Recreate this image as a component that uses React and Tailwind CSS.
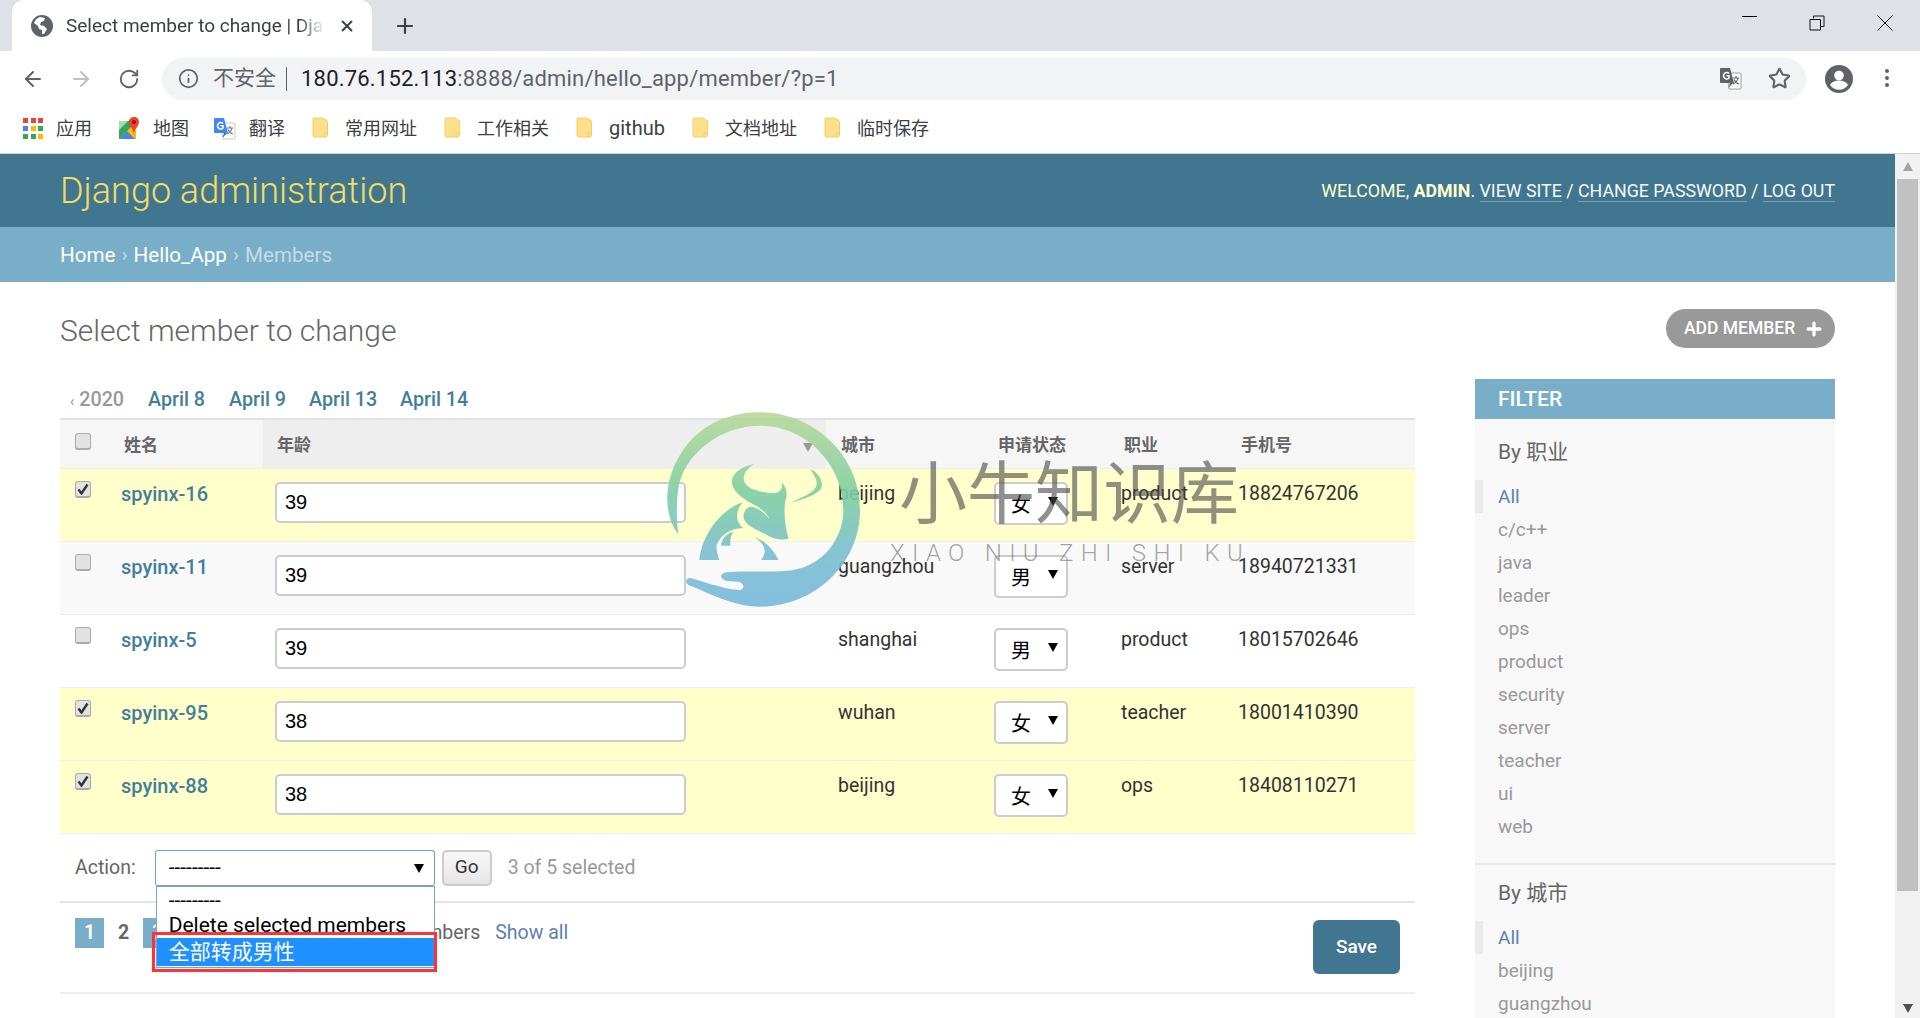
import { ArrowLeft, ArrowRight, RotateCw, Info, Star, Plus, X } from "lucide-react";

const members = [
  { name: "spyinx-16", age: 39, city: "beijing", sex: "女", job: "product", phone: "18824767206", checked: true },
  { name: "spyinx-11", age: 39, city: "guangzhou", sex: "男", job: "server", phone: "18940721331", checked: false },
  { name: "spyinx-5", age: 39, city: "shanghai", sex: "男", job: "product", phone: "18015702646", checked: false },
  { name: "spyinx-95", age: 38, city: "wuhan", sex: "女", job: "teacher", phone: "18001410390", checked: true },
  { name: "spyinx-88", age: 38, city: "beijing", sex: "女", job: "ops", phone: "18408110271", checked: true },
];

const rowBg = ["bg-[#ffffcc]", "bg-[#f9f9f9]", "bg-white", "bg-[#ffffcc]", "bg-[#ffffcc]"];
const jobs = ["c/c++", "java", "leader", "ops", "product", "security", "server", "teacher", "ui", "web"];
const folders = ["常用网址", "工作相关", "github", "文档地址", "临时保存"];

function Globe() {
  return (
    <svg width="22" height="22" viewBox="0 0 22 22">
      <circle cx="11" cy="11" r="11" fill="#5f6368" />
      <path d="M9 2c-3 1-5 3-6 6l4 3 1 3 3 1v4h2l3-5-3-3-4-1 1-3 3-1 1-3z" fill="#fff" />
    </svg>
  );
}

function Folder() {
  return (
    <svg width="17" height="22" viewBox="0 0 17 22">
      <path d="M1 2.500C1 1.700 1.700 1 2.500 1h8l5 3v14.500c0 .8-.7 1.500-1.500 1.500h-11C1.700 20 1 19.300 1 18.500z" fill="#fee08a" stroke="#f3cf62" />
      <path d="M12 20v-4h3.500" fill="none" stroke="#f3cf62" />
    </svg>
  );
}

function Apps() {
  const colors = ["#ea4335", "#ea4335", "#ea4335", "#4285f4", "#fbbc05", "#34a853", "#34a853", "#34a853", "#fbbc05"];
  return (
    <div className="grid grid-cols-3 gap-[3px] w-[20px]">
      {colors.map((c, i) => (
        <span key={i} className="w-[5px] h-[5px]" style={{ background: c }} />
      ))}
    </div>
  );
}

function MapsIcon() {
  return (
    <svg width="22" height="24" viewBox="0 0 22 24">
      <path d="M1 5h13v18H1z" fill="#34a853" />
      <path d="M1 23l13-13 4 5v8z" fill="#fbbc05" />
      <path d="M1 23l8-8 8 8z" fill="#4285f4" />
      <path d="M1 5h9L1 14z" fill="#a8dab5" />
      <path d="M16 1c-3 0-5 2-5 5 0 4 5 8 5 12 0-4 5-8 5-12 0-3-2-5-5-5z" fill="#ea4335" />
      <circle cx="16" cy="6" r="2" fill="#a50e0e" />
    </svg>
  );
}

function TranslateIcon({ mono }) {
  return (
    <svg width="23" height="23" viewBox="0 0 23 23">
      <path d="M8 6h13c.6 0 1 .4 1 1v14c0 .6-.4 1-1 1H10z" fill="#fff" stroke={mono ? "#9aa0a6" : "#c8c8c8"} />
      <path d="M2 1h9l4 15H2c-.6 0-1-.4-1-1V2c0-.6.4-1 1-1z" fill={mono ? "#5f6368" : "#4285f4"} />
      <path d="M11 16l-1.500 5L14 16z" fill={mono ? "#5f6368" : "#3367d6"} />
      <path d="M10 6.500A3.200 3.200 0 1 0 10 11V8.800H7.500" fill="none" stroke="#fff" strokeWidth="1.600" />
      <path d="M14 11h6M17 9v2M19 11c-.5 3-3 5-5 6M15 12.500c1 2 3 4 5 4.500" fill="none" stroke={mono ? "#5f6368" : "#777"} strokeWidth="1.200" />
    </svg>
  );
}

function Avatar() {
  return (
    <svg width="28" height="28" viewBox="0 0 28 28">
      <circle cx="14" cy="14" r="14" fill="#5f6368" />
      <circle cx="14" cy="10.500" r="4.800" fill="#fff" />
      <path d="M5 20c2-3.500 6-4.500 9-4.500s7 1 9 4.500c-2 3-5.500 4.800-9 4.800S7 23 5 20z" fill="#fff" />
    </svg>
  );
}

function Triangle({ className }) {
  return (
    <svg width="10" height="10" viewBox="0 0 10 10" className={className}>
      <path d="M0 1h10L5 10z" fill="currentColor" />
    </svg>
  );
}

function Check({ checked }) {
  return (
    <div className="w-[16px] h-[17px] rounded-[3px] border border-[#aaa] border-b-2 bg-[#e2e2e2] flex items-center justify-center">
      {checked && (
        <svg width="12" height="12" viewBox="0 0 12 12">
          <path d="M1.500 6.500L4.500 10.500L10.500 1.500" fill="none" stroke="#333" strokeWidth="2.400" />
        </svg>
      )}
    </div>
  );
}

function Logo() {
  return (
    <svg width="220" height="210" viewBox="0 0 660 630" className="absolute left-[660px] top-[405px] opacity-90">
      <defs>
        <linearGradient id="logoFade" gradientUnits="userSpaceOnUse" x1="0" y1="22" x2="0" y2="605">
          <stop offset="0" stopColor="#b9d898" />
          <stop offset="0.4" stopColor="#7fcfa3" />
          <stop offset="0.72" stopColor="#7abfd0" />
          <stop offset="1" stopColor="#78b9da" />
        </linearGradient>
      </defs>
      <g fill="url(#logoFade)">
        <path d="M55 388C10 330 10 230 60 150C120 50 220 22 300 22C460 22 600 150 600 315C600 480 460 605 300 605C220 605 150 565 85 540C72 530 80 516 95 520C130 530 200 555 240 555C258 550 250 532 235 530L200 528C175 520 180 505 200 502C260 495 340 505 400 495C490 480 550 400 550 315C550 180 440 62 300 62C180 62 70 150 55 250C48 300 50 350 55 388Z" />
        <path d="M283 176C255 195 245 215 255 235C270 255 300 262 345 265C360 262 370 250 365 232C380 245 384 270 376 288C370 320 376 370 386 400C370 408 340 402 325 392C285 372 255 360 250 335C252 315 262 304 275 305C295 308 315 325 328 342C320 322 295 305 268 292C240 275 216 255 216 232C212 205 245 185 283 176Z" />
        <path d="M118 465C125 400 170 320 248 292C225 320 225 350 250 370C230 370 190 375 170 420C168 440 175 455 178 465Z" />
        <path d="M183 422C185 400 200 385 220 380C210 395 210 410 212 422Z" />
        <path d="M283 395C320 410 345 440 355 465L303 465C320 445 320 420 283 395Z" />
        <path d="M393 293C430 275 470 262 470 235C470 215 455 205 452 192C480 205 495 240 480 255C460 275 420 285 393 293Z" />
      </g>
    </svg>
  );
}

function FilterList({ title, items }) {
  return (
    <div>
      <h3 className="pl-[23px] pt-[20px] h-[61px] text-[21px] leading-[27px] text-[#666]">{title}</h3>
      <ul>
        <li className="h-[33px] pl-[15px] border-l-[8px] border-[#eaeaea] text-[19px] leading-[33px] text-[#5b80b2]">All</li>
        {items.map((item) => (
          <li key={item} className="h-[33px] pl-[23px] text-[19px] leading-[33px] text-[#999]">{item}</li>
        ))}
      </ul>
    </div>
  );
}

export default function App() {
  return (
    <div className="relative w-[1920px] h-[1018px] overflow-hidden flex flex-col bg-white text-[#333] font-[family-name:Roboto,'Noto_Sans_CJK_SC',sans-serif]">
      {/* browser chrome */}
      <div className="h-[51px] shrink-0 bg-[#dee1e6] flex items-stretch pl-[12px]">
        <div className="w-[360px] bg-white rounded-t-[12px] flex items-center pl-[19px] pr-[16px] gap-[13px]">
          <Globe />
          <span className="flex-1 mt-[2px] overflow-hidden whitespace-nowrap text-[19px] text-[#3c4043] [mask-image:linear-gradient(to_right,black_90%,transparent)]">
            Select member to change | Django site admin
          </span>
          <X size={18} strokeWidth={2.5} className="text-[#3c4043]" />
        </div>
        <Plus size={24} strokeWidth={2.2} className="ml-[21px] self-center text-[#3c4043]" />
        <div className="ml-auto flex items-center">
          <div className="w-[68px] flex justify-center"><span className="w-[15px] h-[1px] bg-black -mt-[10px]" /></div>
          <div className="w-[68px] flex justify-center">
            <svg width="16" height="16" viewBox="0 0 16 16" className="-mt-[5px]">
              <path d="M4.500 3.500V1H15v10.500h-3M1 4.500h10.500V15H1z" fill="none" stroke="#111" />
            </svg>
          </div>
          <div className="w-[69px] flex justify-center pr-[2px]">
            <svg width="16" height="16" viewBox="0 0 16 16" className="-mt-[5px]">
              <path d="M.5.500l15 15M15.500.500l-15 15" fill="none" stroke="#111" />
            </svg>
          </div>
        </div>
      </div>

      <div className="h-[55px] shrink-0 bg-white flex items-center pl-[21px]">
        <ArrowLeft size={24} className="text-[#5f6368]" />
        <ArrowRight size={24} className="ml-[24px] text-[#bdc1c6]" />
        <RotateCw size={22} className="ml-[25px] text-[#5f6368]" />
        <div className="ml-[22px] w-[1644px] h-[42px] rounded-full bg-[#f1f3f4] flex items-center pl-[16px] pr-[15px]">
          <Info size={21} className="text-[#5f6368]" />
          <span className="ml-[14px] text-[21px] text-[#5f6368]">不安全</span>
          <span className="ml-[10px] w-[1px] h-[24px] bg-[#5f6368]" />
          <span className="ml-[14px] text-[22px] tracking-[0.2px] text-[#202124]">180.76.152.113<span className="text-[#5f6368]">:8888/admin/hello_app/member/?p=1</span></span>
          <div className="ml-auto flex items-center gap-[26px]">
            <TranslateIcon mono />
            <Star size={23} strokeWidth={2.2} className="text-[#5f6368]" />
          </div>
        </div>
        <div className="ml-[19px]"><Avatar /></div>
        <div className="ml-[32px] -mt-[2px] flex flex-col gap-[3px]">
          <span className="w-[4px] h-[4px] rounded-full bg-[#5f6368]" />
          <span className="w-[4px] h-[4px] rounded-full bg-[#5f6368]" />
          <span className="w-[4px] h-[4px] rounded-full bg-[#5f6368]" />
        </div>
      </div>

      <div className="h-[48px] shrink-0 pb-[3px] bg-white border-b border-[#d0d3d8] flex items-center pl-[23px] text-[18px] text-[#3c4043]">
        <Apps />
        <span className="ml-[13px] w-[37px]">应用</span>
        <div className="ml-[25px]"><MapsIcon /></div>
        <span className="ml-[13px] w-[37px]">地图</span>
        <div className="ml-[23px]"><TranslateIcon /></div>
        <span className="ml-[13px] w-[37px]">翻译</span>
        <div className="ml-[26px] flex items-center gap-[27px]">
          {folders.map((f) => (
            <div key={f} className="flex items-center gap-[16px]">
              <Folder />
              <span className={f === "github" ? "text-[20px]" : ""}>{f}</span>
            </div>
          ))}
        </div>
      </div>

      {/* page */}
      <div className="flex-1 min-h-0 flex">
        <div className="w-[1895px] overflow-hidden">
          <header className="h-[73px] bg-[#417690] flex items-center justify-between px-[60px]">
            <h1 className="text-[36px] font-light text-[#f5dd5d]">Django administration</h1>
            <div className="mt-[2px] text-[17.800px] uppercase text-[#ffffcc]">
              Welcome, <strong className="font-bold">admin</strong>.{" "}
              <a className="text-[#f8f8f8] border-b border-[rgba(255,255,255,0.3)]">View site</a> /{" "}
              <a className="text-[#f8f8f8] border-b border-[rgba(255,255,255,0.3)]">Change password</a> /{" "}
              <a className="text-[#f8f8f8] border-b border-[rgba(255,255,255,0.3)]">Log out</a>
            </div>
          </header>
          <div className="h-[55px] pt-[2px] bg-[#79aec8] flex items-center px-[60px] text-[20.600px] text-[#c4dce8]">
            <a className="text-white">Home</a>
            <span className="mx-[6px]">›</span>
            <a className="text-white">Hello_App</a>
            <span className="mx-[6px]">›</span>
            <span>Members</span>
          </div>

          <div className="px-[60px] pt-[27px]">
            <div className="flex items-start justify-between">
              <h2 className="text-[30px] font-light leading-[44px] text-[#666]">Select member to change</h2>
              <a className="h-[39px] w-[169px] rounded-full bg-[#999] flex items-center pl-[18px] gap-[9px] text-[17.500px] font-medium uppercase text-white">
                Add member
                <Plus size={20} strokeWidth={4} />
              </a>
            </div>

            <div className="mt-[26px] flex justify-between">
              <div className="w-[1355px]">
                <div className="h-[39px] pt-[2px] flex items-center pl-[10px] text-[19.700px] font-medium text-[#447e9b]">
                  <span className="text-[#999] w-[78px]"><span className="text-[14px] mr-[5px]">‹</span>2020</span>
                  <a className="w-[81px]">April 8</a>
                  <a className="w-[80px]">April 9</a>
                  <a className="w-[91px]">April 13</a>
                  <a>April 14</a>
                </div>

                <table className="w-full table-fixed border-t-2 border-[#e1e1e1] text-[19.500px] border-collapse">
                  <colgroup>
                    <col className="w-[53px]" />
                    <col className="w-[150px]" />
                    <col className="w-[563px]" />
                    <col className="w-[156px]" />
                    <col className="w-[127px]" />
                    <col className="w-[117px]" />
                    <col />
                  </colgroup>
                  <thead>
                    <tr className="h-[49px] bg-[#f6f6f6] text-[17px] font-semibold text-[#666] text-left">
                      <th className="pl-[15px] pb-[5px] align-middle font-semibold"><Check /></th>
                      <th className="pl-[11px] pt-[3px] font-semibold">姓名</th>
                      <th className="pl-[14px] pt-[3px] font-semibold bg-[#eee]">
                        <div className="flex items-center justify-between pr-[13px]">
                          年龄
                          <Triangle className="text-[#999] mt-[3px]" />
                        </div>
                      </th>
                      <th className="pl-[15px] pt-[3px] font-semibold">城市</th>
                      <th className="pl-[16px] pt-[3px] font-semibold">申请状态</th>
                      <th className="pl-[15px] pt-[3px] font-semibold">职业</th>
                      <th className="pl-[15px] pt-[3px] font-semibold">手机号</th>
                    </tr>
                  </thead>
                  <tbody>
                    {members.map((m, i) => (
                      <tr key={m.name} className={`h-[73px] border-t border-[#eee] align-top ${rowBg[i]}`}>
                        <td className="pl-[15px] pt-[12px]"><Check checked={m.checked} /></td>
                        <td className="pl-[8px] pt-[13px] leading-[24px] text-[20px] font-medium text-[#447e9b]">{m.name}</td>
                        <td className="pl-[12px] pt-[13px]">
                          <input
                            defaultValue={m.age}
                            className="w-[411px] h-[41px] px-[8px] border-2 border-[#ccc] rounded-[5px] bg-white text-[20px] text-black font-[family-name:'Liberation_Sans',sans-serif]"
                          />
                        </td>
                        <td className="pl-[12px] pt-[13px] leading-[24px]">{m.city}</td>
                        <td className="pl-[12px] pt-[13px]">
                          <div className="w-[74px] h-[43px] border-2 border-[#ccc] rounded-[5px] bg-white flex items-center pl-[15px] text-[20px] text-black">
                            <span className="pt-[3px]">{m.sex}</span>
                            <Triangle className="ml-[17px] -mt-[5px]" />
                          </div>
                        </td>
                        <td className="pl-[12px] pt-[13px] leading-[24px]">{m.job}</td>
                        <td className="pl-[12px] pt-[13px] leading-[24px]">{m.phone}</td>
                      </tr>
                    ))}
                  </tbody>
                </table>

                <div className="h-[70px] border-t border-[#eee] border-b-2 border-b-[#e4e4e4] flex items-center pl-[15px] text-[19.500px] text-[#666]">
                  Action:
                  <div className="relative ml-[19px]">
                    <div className="w-[280px] h-[36px] bg-white border border-[#6b9aea] border-b-[#8c9aa8] rounded-[3px] flex items-center pl-[13px] text-[21px] text-black">
                      ---------
                      <Triangle className="ml-auto mr-[10px]" />
                    </div>
                    <div className="absolute left-[1px] top-[36px] w-[279px] h-[82px] bg-white border border-[#7aa0e0] text-[21px] text-black">
                      <div className="pl-[12px] h-[26px] leading-[26px]">---------</div>
                      <div className="pl-[12px] h-[25px] leading-[25px]">Delete selected members</div>
                      <div className="pl-[12px] h-[28px] leading-[28px] bg-[#1e90ff] text-white">全部转成男性</div>
                      <div className="absolute -left-[5px] -right-[3px] top-[45px] h-[40px] border-[3px] border-[#ff3333]" />
                    </div>
                  </div>
                  <button className="ml-[7px] w-[50px] h-[36px] border-2 border-[#ccc] rounded-[5px] bg-gradient-to-b from-[#f8f8f8] to-[#e6e6e6] text-[19px] text-[#333]">Go</button>
                  <span className="ml-[16px] text-[19.500px] text-[#999]">3 of 5 selected</span>
                </div>

                <div className="h-[91px] border-b-2 border-[#eee] flex items-start justify-between pt-[17px] pl-[15px] pr-[15px] text-[19.500px] text-[#666]">
                  <div className="flex items-center -mt-[2px]">
                    <span className="w-[29px] h-[30px] bg-[#79aec8] text-white font-semibold text-center leading-[30px]">1</span>
                    <span className="ml-[14px] w-[25px] font-bold">2</span>
                    <span className="w-[29px] h-[30px] bg-[#79aec8] text-white text-center leading-[30px]">3</span>
                    <span className="ml-[188px]">100 members</span>
                    <a className="ml-[15px] text-[#5b80b2]">Show all</a>
                  </div>
                  <button className="w-[87px] h-[54px] rounded-[6px] bg-[#417690] text-[19px] font-medium text-white">Save</button>
                </div>
              </div>

              <aside className="w-[360px] bg-[#f8f8f8]">
                <div className="h-[40px] bg-[#79aec8] pl-[23px] text-[21px] font-medium leading-[40px] text-white">FILTER</div>
                <div className="pb-[20px] border-b-2 border-[#eaeaea]">
                  <FilterList title="By 职业" items={jobs} />
                </div>
                <div className="-mt-[5px]">
                  <FilterList title="By 城市" items={["beijing", "guangzhou", "shanghai"]} />
                </div>
              </aside>
            </div>
          </div>
        </div>

        {/* page scrollbar */}
        <div className="w-[25px] bg-[#f1f1f1] flex flex-col items-center">
          <div className="h-[25px] shrink-0 flex items-center justify-center">
            <Triangle className="rotate-180 text-[#a3a3a3]" />
          </div>
          <div className="w-[21px] h-[712px] bg-[#c1c1c1]" />
          <Triangle className="mt-auto mb-[5px] text-[#505050]" />
        </div>
      </div>

      {/* site watermark */}
      <Logo />
      <div className="absolute left-[899px] top-[449px] text-[68px] leading-[80px] font-normal text-[rgba(70,70,70,0.6)] whitespace-nowrap font-[family-name:'Noto_Sans_CJK_SC',sans-serif]">小牛知识库</div>
      <div className="absolute left-[890px] top-[538px] text-[24px] leading-[30px] font-light tracking-[7.300px] text-[rgba(90,90,90,0.55)] whitespace-nowrap">XIAO NIU ZHI SHI KU</div>
    </div>
  );
}
